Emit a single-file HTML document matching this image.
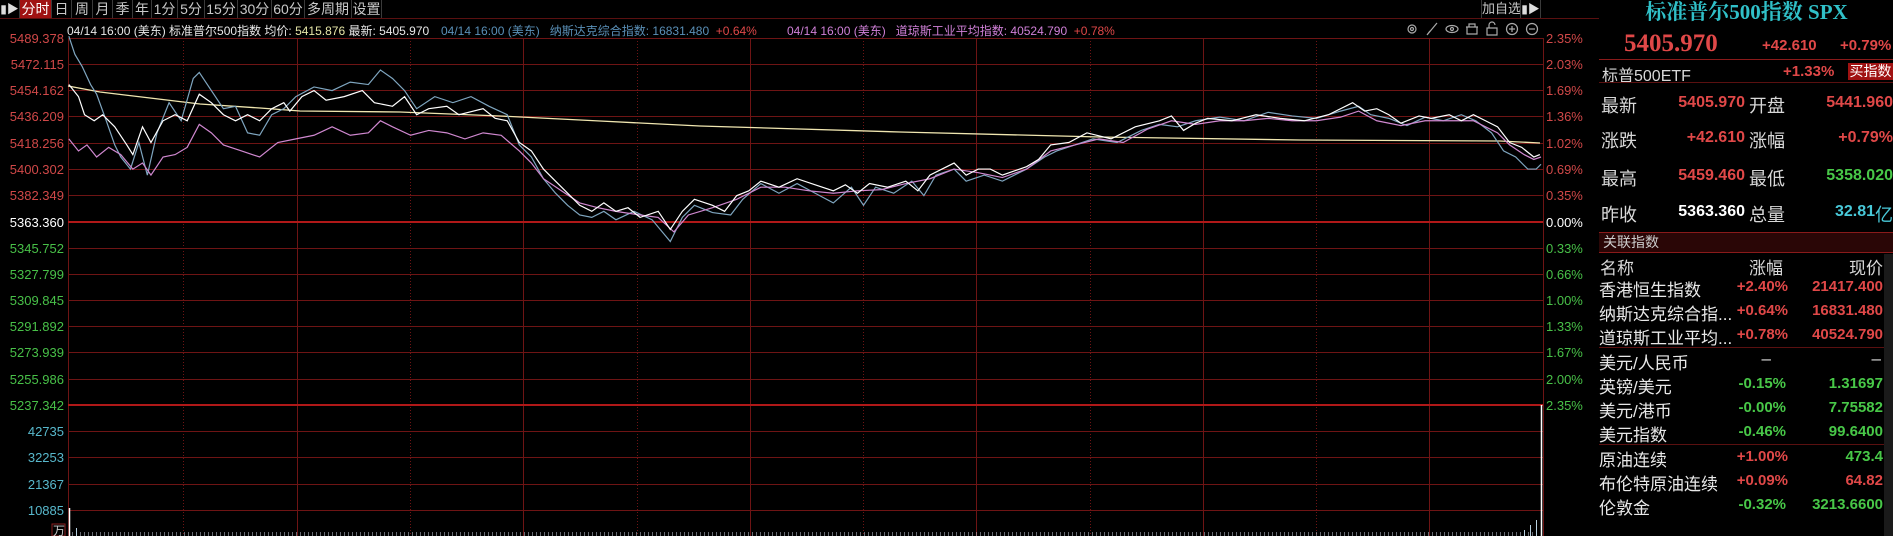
<!DOCTYPE html>
<html><head><meta charset="utf-8"><style>
*{margin:0;padding:0;box-sizing:border-box}
body{width:1893px;height:536px;background:#000;overflow:hidden;position:relative;font-family:"Liberation Sans","Noto Sans CJK SC",sans-serif;color:#ccc}
.a{position:absolute;white-space:nowrap}
.tab{position:absolute;top:0;height:18px;line-height:18px;font-size:14px;color:#c8c8c8;text-align:center;border-right:1px solid #3a3a3a;white-space:nowrap;overflow:hidden}
.lab{position:absolute;font-size:18px;color:#d8d8d8}
.val{position:absolute;font-size:16px;font-weight:bold;text-align:right}
.red{color:#e04848}.grn{color:#48c848}.cy{color:#48c8d8}.wh{color:#fff}
.row{position:absolute;left:1599px;width:284px;height:24px;font-size:17px}
.row span{position:absolute;top:0}
</style></head><body>
<div class="a" style="left:0;top:18px;width:1599px;height:1px;background:#5a1010"></div>
<div class="tab" style="left:0;width:20px;color:#ddd;font-size:12px">&#9646;&#9654;</div>
<div class="tab" style="left:20px;width:32px;background:#a01212;color:#fff">分时</div>
<div class="tab" style="left:52px;width:20px">日</div>
<div class="tab" style="left:72px;width:21px">周</div>
<div class="tab" style="left:93px;width:20px">月</div>
<div class="tab" style="left:113px;width:20px">季</div>
<div class="tab" style="left:133px;width:19px">年</div>
<div class="tab" style="left:152px;width:26px">1分</div>
<div class="tab" style="left:178px;width:27px">5分</div>
<div class="tab" style="left:205px;width:33px">15分</div>
<div class="tab" style="left:238px;width:34px">30分</div>
<div class="tab" style="left:272px;width:33px">60分</div>
<div class="tab" style="left:305px;width:47px">多周期</div>
<div class="tab" style="left:352px;width:30px">设置</div>
<div class="tab" style="left:1481px;width:40px;border-left:1px solid #3a3a3a;font-size:13px">加自选</div>
<div class="tab" style="left:1521px;width:20px;font-size:12px;color:#ddd">&#9646;&#9654;</div>
<div class="a" style="left:67px;top:22px;font-size:12px;color:#e8e8e8">04/14 16:00 (美东) 标准普尔500指数 均价: <span style="color:#e6e6a8">5415.876</span> 最新: 5405.970</div>
<div class="a" style="left:441px;top:22px;font-size:12px;color:#5a90b8">04/14 16:00 (美东) &nbsp; 纳斯达克综合指数: 16831.480 &nbsp;<span style="color:#e04848">+0.64%</span></div>
<div class="a" style="left:787px;top:22px;font-size:12px;color:#d080d8">04/14 16:00 (美东) &nbsp; 道琼斯工业平均指数: 40524.790 &nbsp;<span style="color:#e04848">+0.78%</span></div>

<svg class="a" style="left:0;top:0" width="1599" height="536" viewBox="0 0 1599 536">
<g font-family="Liberation Sans,sans-serif" font-size="13">
<g stroke="#6e1414" stroke-width="1">
<line x1="68" x2="1543" y1="38.5" y2="38.5"/><line x1="68" x2="1543" y1="64.5" y2="64.5"/><line x1="68" x2="1543" y1="90.5" y2="90.5"/><line x1="68" x2="1543" y1="116.5" y2="116.5"/><line x1="68" x2="1543" y1="143.5" y2="143.5"/><line x1="68" x2="1543" y1="169.5" y2="169.5"/><line x1="68" x2="1543" y1="195.5" y2="195.5"/><line x1="68" x2="1543" y1="248.5" y2="248.5"/><line x1="68" x2="1543" y1="274.5" y2="274.5"/><line x1="68" x2="1543" y1="300.5" y2="300.5"/><line x1="68" x2="1543" y1="326.5" y2="326.5"/><line x1="68" x2="1543" y1="352.5" y2="352.5"/><line x1="68" x2="1543" y1="379.5" y2="379.5"/><line x1="68" x2="1543" y1="431.5" y2="431.5"/><line x1="68" x2="1543" y1="457.5" y2="457.5"/><line x1="68" x2="1543" y1="484.5" y2="484.5"/><line x1="68" x2="1543" y1="510.5" y2="510.5"/>
<line x1="68.5" x2="68.5" y1="38" y2="536"/><line x1="1543.5" x2="1543.5" y1="38" y2="536"/>
<line x1="297.5" x2="297.5" y1="38" y2="536"/><line x1="523.5" x2="523.5" y1="38" y2="536"/><line x1="750.5" x2="750.5" y1="38" y2="536"/><line x1="976.5" x2="976.5" y1="38" y2="536"/><line x1="1203.5" x2="1203.5" y1="38" y2="536"/><line x1="1429.5" x2="1429.5" y1="38" y2="536"/>
</g>
<g stroke="#6e1414" stroke-width="1" stroke-dasharray="1,2">
<line x1="183.5" x2="183.5" y1="38" y2="536"/><line x1="410.5" x2="410.5" y1="38" y2="536"/><line x1="637.5" x2="637.5" y1="38" y2="536"/><line x1="863.5" x2="863.5" y1="38" y2="536"/><line x1="1090.5" x2="1090.5" y1="38" y2="536"/><line x1="1316.5" x2="1316.5" y1="38" y2="536"/>
</g>
<line x1="68" x2="1543" y1="222" y2="222" stroke="#b01818" stroke-width="2"/>
<line x1="68" x2="1543" y1="405" y2="405" stroke="#b01818" stroke-width="2"/>
<line x1="1599.5" x2="1599.5" y1="0" y2="536" stroke="#5a1010"/>
<g text-anchor="end" fill="#d04848">
<text x="64" y="43">5489.378</text><text x="64" y="69">5472.115</text><text x="64" y="95">5454.162</text><text x="64" y="121">5436.209</text><text x="64" y="148">5418.256</text><text x="64" y="174">5400.302</text><text x="64" y="200">5382.349</text>
<text x="64" y="227" fill="#fff">5363.360</text>
<g fill="#48c048"><text x="64" y="253">5345.752</text><text x="64" y="279">5327.799</text><text x="64" y="305">5309.845</text><text x="64" y="331">5291.892</text><text x="64" y="357">5273.939</text><text x="64" y="384">5255.986</text><text x="64" y="410">5237.342</text></g>
<g fill="#58b8cc"><text x="64" y="436">42735</text><text x="64" y="462">32253</text><text x="64" y="489">21367</text><text x="64" y="515">10885</text></g>
</g>
<rect x="52" y="524" width="13" height="12" fill="none" stroke="#8a2020"/><text x="53" y="535" fill="#c8c8c8" font-size="12">万</text>
<g fill="#d04848">
<text x="1546" y="43">2.35%</text><text x="1546" y="69">2.03%</text><text x="1546" y="95">1.69%</text><text x="1546" y="121">1.36%</text><text x="1546" y="148">1.02%</text><text x="1546" y="174">0.69%</text><text x="1546" y="200">0.35%</text>
<text x="1546" y="227" fill="#fff">0.00%</text>
<g fill="#48c048"><text x="1546" y="253">0.33%</text><text x="1546" y="279">0.66%</text><text x="1546" y="305">1.00%</text><text x="1546" y="331">1.33%</text><text x="1546" y="357">1.67%</text><text x="1546" y="384">2.00%</text><text x="1546" y="410">2.35%</text></g>
</g>
</g>
<g fill="none" stroke="#aaa" stroke-width="1.2">
<circle cx="1412" cy="29" r="4"/><circle cx="1412" cy="29" r="1.5"/>
<path d="M1427 35 L1437 23 M1427 35 L1430 31"/>
<ellipse cx="1452" cy="29" rx="6" ry="3.5"/><circle cx="1452" cy="29" r="1.5"/>
<path d="M1466 27 h12 M1467 27 v7 h10 v-7 M1469 27 v-3 h6 v3"/>
<path d="M1487 28 h10 v7 h-10 z M1489 28 v-3 a3 3 0 0 1 6 0"/>
<circle cx="1512" cy="29" r="5.5"/><path d="M1509 29 h6 M1512 26 v6"/>
<circle cx="1532" cy="29" r="5.5"/><path d="M1529 29 h6"/>
</g>
<polyline fill="none" stroke="#f0e6b0" stroke-width="1.3" points="68,86 100,92 150,98 200,104 260,108 300,111 400,112 500,116 600,121 700,126 900,132 1100,137 1300,140 1500,141 1540,143"/>
<g transform="scale(1.2077)" fill="none" stroke-width="1.2">
<polyline stroke="#7fa6c0" vector-effect="non-scaling-stroke" points="57,30 62,45 68,55 75,70 80,78 88,100 95,120 100,130 108,140 115,118 122,145 130,110 140,85 150,100 160,65 165,60 175,75 185,90 195,88 205,110 215,112 225,95 235,90 245,80 260,72 275,75 290,68 305,70 315,58 325,65 335,75 345,90 360,80 375,85 390,80 405,88 420,95 430,120 440,130 450,148 460,160 470,170 480,178 490,180 500,175 510,182 525,175 540,182 555,200 565,180 575,170 590,176 605,178 615,165 630,152 645,160 660,152 675,160 690,168 705,155 715,170 725,155 740,160 755,150 765,162 775,145 790,140 800,150 815,145 830,150 850,140 865,130 875,125 890,120 905,115 925,118 945,108 960,103 975,105 990,100 1010,97 1030,100 1050,93 1070,96 1090,98 1110,92 1125,88 1135,95 1150,98 1165,104 1180,97 1195,100 1210,95 1222,100 1235,110 1245,125 1255,130 1265,140 1272,140 1276,136"/>
<polyline stroke="#d088d0" vector-effect="non-scaling-stroke" points="57,115 65,125 72,120 80,130 90,122 100,128 110,140 118,135 125,145 135,130 145,128 155,122 165,103 175,110 185,120 200,125 215,130 230,118 245,115 260,112 275,105 290,112 305,110 315,100 325,105 340,112 355,108 370,110 385,115 400,110 415,112 430,125 440,135 450,148 465,158 480,168 495,172 510,175 530,178 545,180 558,192 570,178 590,172 610,165 630,155 650,155 670,158 690,160 710,158 730,157 750,152 770,148 790,140 810,143 830,147 850,140 870,125 890,120 910,115 930,118 950,107 970,100 990,103 1010,100 1030,100 1050,98 1070,100 1090,100 1110,97 1125,92 1140,100 1160,104 1180,100 1200,100 1220,100 1240,110 1250,120 1262,128 1270,132 1276,130"/>
<polyline stroke="#ffffff" vector-effect="non-scaling-stroke" points="57,70 65,80 70,95 78,100 85,95 95,105 105,120 110,128 118,105 125,118 135,100 145,95 155,100 165,78 175,85 185,95 195,100 205,95 215,100 225,90 235,85 240,92 250,80 260,75 270,83 285,80 300,75 310,85 325,88 335,80 345,95 355,90 370,88 380,95 400,90 410,98 420,100 430,118 440,125 450,140 460,150 470,160 480,170 490,175 500,168 510,175 520,172 530,180 545,175 555,190 565,175 575,165 590,170 600,175 610,162 620,158 630,150 645,155 660,148 675,153 690,158 700,153 710,160 720,152 735,155 750,150 760,158 770,145 780,140 790,135 800,145 810,140 820,140 830,145 850,138 860,132 870,120 885,118 900,110 920,115 940,105 960,100 970,96 980,108 990,102 1000,98 1020,100 1040,95 1060,98 1080,100 1100,95 1120,85 1130,92 1140,90 1150,95 1160,102 1175,96 1185,98 1200,95 1210,100 1220,95 1230,100 1240,105 1250,118 1260,122 1270,130 1275,128"/>
</g>
<line x1="69.5" x2="69.5" y1="508" y2="536" stroke="#fff" stroke-width="1.5"/>
<line x1="1541.5" x2="1541.5" y1="405" y2="536" stroke="#fff" stroke-width="1.5"/>
<g stroke="#cfd8e8" stroke-width="1" stroke-dasharray="1,3">
<line x1="72" x2="1540" y1="533" y2="533"/><line x1="72" x2="1540" y1="535" y2="535"/>
</g>
<g stroke="#b8d0e0"><line x1="76.5" x2="76.5" y1="528" y2="536"/><line x1="1530.5" x2="1530.5" y1="525" y2="536"/><line x1="1524.5" x2="1524.5" y1="530" y2="536"/><line x1="1536.5" x2="1536.5" y1="520" y2="536"/></g>
</svg>

<div class="a" style="left:1600px;top:0;width:293px;text-align:center;font-family:'Liberation Serif','Noto Serif CJK SC',serif;font-weight:bold;font-size:21px;color:#30c0c8;line-height:24px">标准普尔500指数 SPX</div>
<div class="a" style="left:1624px;top:30px;font-family:'Liberation Serif',serif;font-weight:bold;font-size:25px;color:#e04848">5405.970</div>
<div class="a red" style="left:1762px;top:37px;font-size:15px;font-weight:bold">+42.610</div>
<div class="a red" style="left:1840px;top:37px;font-size:15px;font-weight:bold">+0.79%</div>
<div class="a" style="left:1599px;top:59px;width:294px;height:1px;background:#8a1a1a"></div>
<div class="a" style="left:1602px;top:62px;font-size:16px;color:#d8d8d8">标普500ETF</div>
<div class="a red" style="left:1783px;top:63px;font-size:15px;font-weight:bold">+1.33%</div>
<div class="a" style="left:1848px;top:63px;width:45px;height:17px;background:#a01212;color:#fff;font-size:14px;line-height:17px;text-align:center">买指数</div>
<div class="a" style="left:1599px;top:82px;width:294px;height:1px;background:#5a1010"></div>
<div class="lab" style="left:1601px;top:92px">最新</div><div class="val red" style="left:1660px;top:94px;width:85px">5405.970</div>
<div class="lab" style="left:1749px;top:92px">开盘</div><div class="val red" style="left:1800px;top:94px;width:93px">5441.960</div>
<div class="lab" style="left:1601px;top:127px">涨跌</div><div class="val red" style="left:1660px;top:129px;width:85px">+42.610</div>
<div class="lab" style="left:1749px;top:127px">涨幅</div><div class="val red" style="left:1800px;top:129px;width:93px">+0.79%</div>
<div class="lab" style="left:1601px;top:165px">最高</div><div class="val red" style="left:1660px;top:167px;width:85px">5459.460</div>
<div class="lab" style="left:1749px;top:165px">最低</div><div class="val grn" style="left:1800px;top:167px;width:93px">5358.020</div>
<div class="lab" style="left:1601px;top:201px">昨收</div><div class="val wh" style="left:1660px;top:203px;width:85px">5363.360</div>
<div class="lab" style="left:1749px;top:201px">总量</div><div class="val cy" style="left:1800px;top:203px;width:75px">32.81</div><div class="lab" style="left:1875px;top:201px;color:#48c8d8">亿</div>
<div class="a" style="left:1599px;top:232px;width:294px;height:21px;background:#2a0606;border-top:1px solid #8a1a1a;border-bottom:1px solid #8a1a1a;font-size:14px;line-height:19px;padding-left:4px;color:#ccc">关联指数</div>
<div class="a" style="left:1884px;top:254px;width:9px;height:282px;background:#1a1a1a"></div>
<div class="row" style="top:254px;color:#d8d8d8"><span style="left:1px">名称</span><span style="left:150px">涨幅</span><span style="right:0">现价</span></div>
<div class="a" style="left:1599px;top:347px;width:285px;height:1px;background:#5a1010"></div>
<div class="a" style="left:1599px;top:444px;width:285px;height:1px;background:#5a1010"></div>
<div class="row" style="top:276px"><span style="left:0;color:#e8e8e8">香港恒生指数</span><span class="red" style="right:95px;font-size:15px;font-weight:bold;top:2px">+2.40%</span><span class="red" style="right:0;font-size:15px;font-weight:bold;top:2px">21417.400</span></div>
<div class="row" style="top:300px"><span style="left:0;color:#e8e8e8">纳斯达克综合指...</span><span class="red" style="right:95px;font-size:15px;font-weight:bold;top:2px">+0.64%</span><span class="red" style="right:0;font-size:15px;font-weight:bold;top:2px">16831.480</span></div>
<div class="row" style="top:324px"><span style="left:0;color:#e8e8e8">道琼斯工业平均...</span><span class="red" style="right:95px;font-size:15px;font-weight:bold;top:2px">+0.78%</span><span class="red" style="right:0;font-size:15px;font-weight:bold;top:2px">40524.790</span></div>
<div class="row" style="top:349px"><span style="left:0;color:#e8e8e8">美元/人民币</span><span style="right:112px;color:#ddd">–</span><span style="right:2px;color:#ddd">–</span></div>
<div class="row" style="top:373px"><span style="left:0;color:#e8e8e8">英镑/美元</span><span class="grn" style="right:97px;font-size:15px;font-weight:bold;top:2px">-0.15%</span><span class="grn" style="right:0;font-size:15px;font-weight:bold;top:2px">1.31697</span></div>
<div class="row" style="top:397px"><span style="left:0;color:#e8e8e8">美元/港币</span><span class="grn" style="right:97px;font-size:15px;font-weight:bold;top:2px">-0.00%</span><span class="grn" style="right:0;font-size:15px;font-weight:bold;top:2px">7.75582</span></div>
<div class="row" style="top:421px"><span style="left:0;color:#e8e8e8">美元指数</span><span class="grn" style="right:97px;font-size:15px;font-weight:bold;top:2px">-0.46%</span><span class="grn" style="right:0;font-size:15px;font-weight:bold;top:2px">99.6400</span></div>
<div class="row" style="top:446px"><span style="left:0;color:#e8e8e8">原油连续</span><span class="red" style="right:95px;font-size:15px;font-weight:bold;top:2px">+1.00%</span><span class="grn" style="right:0;font-size:15px;font-weight:bold;top:2px">473.4</span></div>
<div class="row" style="top:470px"><span style="left:0;color:#e8e8e8">布伦特原油连续</span><span class="red" style="right:95px;font-size:15px;font-weight:bold;top:2px">+0.09%</span><span class="red" style="right:0;font-size:15px;font-weight:bold;top:2px">64.82</span></div>
<div class="row" style="top:494px"><span style="left:0;color:#e8e8e8">伦敦金</span><span class="grn" style="right:97px;font-size:15px;font-weight:bold;top:2px">-0.32%</span><span class="grn" style="right:0;font-size:15px;font-weight:bold;top:2px">3213.6600</span></div>
</body></html>
